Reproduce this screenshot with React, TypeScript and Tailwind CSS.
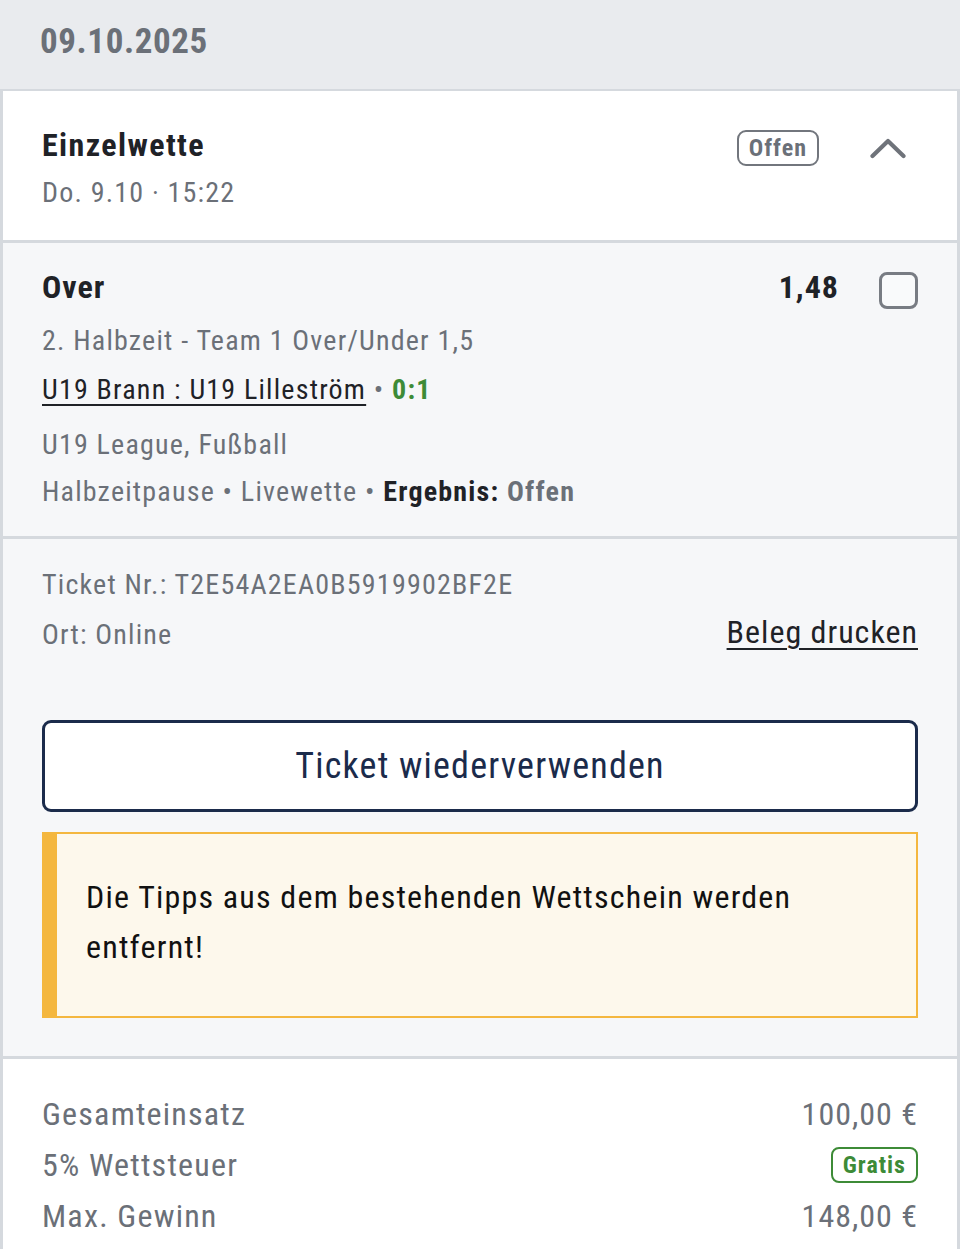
import React from 'react';

const font = { fontFamily: '"Liberation Sans Narrow", "Arial Narrow", "Roboto Condensed", Roboto, sans-serif' };

const ChevronUp = () => (
    <svg width="36" height="24" viewBox="0 0 36 24" fill="none">
        <path d="M2.5 20 L18 5 L33.5 20" stroke="#6f737a" strokeWidth="4.2" strokeLinecap="round" strokeLinejoin="round" />
    </svg>
);

const SummaryRow: React.FC<{ label: string; children: React.ReactNode }> = ({ label, children }) => (
    <div className="flex items-center justify-between h-[51px]">
        <span className="text-[32px] leading-[40px] tracking-[1.2px] text-[#6b7078]">{label}</span>
        {children}
    </div>
);

export default function App() {
    return (
        <div className="w-[960px] min-h-[1249px] bg-[#e9ebee]" style={font}>
            <div className="h-[89px] px-[40px] pb-[6px] flex items-center">
                <h2 className="text-[35px] leading-none font-bold tracking-[0.6px] text-[#6b7078]">09.10.2025</h2>
            </div>

            <div className="border-x-[3px] border-t-2 border-[#d5d9de] bg-white">
                {/* header */}
                <div className="flex items-start justify-between pl-[39px] pr-[51px] pt-[34px] h-[149px]">
                    <div className="flex flex-col gap-[10px]">
                        <span className="text-[32px] leading-[40px] font-bold tracking-[1.4px] text-[#1f2227]">Einzelwette</span>
                        <span className="text-[28px] leading-[36px] tracking-[1.2px] text-[#6b7078]">Do. 9.10 · 15:22</span>
                    </div>
                    <div className="flex items-center gap-[51px] pt-[5px]">
                        <span className="border-2 border-[#72767d] rounded-[9px] px-[10px] h-[36px] flex items-center text-[24px] font-bold tracking-[1px] text-[#6b7078]">Offen</span>
                        <ChevronUp />
                    </div>
                </div>

                {/* selection */}
                <div className="border-t-[3px] border-[#d5d9de] bg-[#f6f7f9] pl-[39px] pr-[39px] pt-[24px] h-[296px]">
                    <div className="flex items-center justify-between">
                        <span className="text-[32px] leading-[40px] font-bold tracking-[1px] text-[#1f2227]">Over</span>
                        <div className="flex items-center gap-[40px] translate-y-[3px]">
                            <span className="text-[32px] leading-[40px] font-bold tracking-[1px] text-[#1f2227] -translate-y-[3px]">1,48</span>
                            <span className="w-[39px] h-[37px] border-[3px] border-[#787c83] rounded-[8px] bg-white/40" />
                        </div>
                    </div>
                    <div className="mt-[16px] text-[28px] leading-[36px] tracking-[1.2px] text-[#6b7078]">2. Halbzeit - Team 1 Over/Under 1,5</div>
                    <div className="mt-[13px] text-[28px] leading-[36px] tracking-[1.2px]">
                        <span className="underline underline-offset-[5px] decoration-2 text-[#1f2227]">U19 Brann : U19 Lilleström</span>
                        <span className="text-[#6b7078]"> • </span>
                        <span className="font-bold text-[#3d8b37]">0:1</span>
                    </div>
                    <div className="mt-[19px] text-[28px] leading-[36px] tracking-[1.2px] text-[#6b7078]">U19 League, Fußball</div>
                    <div className="mt-[11px] text-[28px] leading-[36px] tracking-[1.2px] text-[#6b7078]">
                        Halbzeitpause • Livewette • <span className="font-bold text-[#1f2227]">Ergebnis:</span> <span className="font-bold">Offen</span>
                    </div>
                </div>

                {/* ticket */}
                <div className="border-t-[3px] border-[#d5d9de] bg-[#f6f7f9] pl-[39px] pr-[39px] pt-[28px] h-[520px]">
                    <div className="text-[28px] leading-[36px] tracking-[1.2px] text-[#6b7078]">Ticket Nr.: T2E54A2EA0B5919902BF2E</div>
                    <div className="mt-[12px] flex items-center justify-between">
                        <span className="text-[28px] leading-[36px] tracking-[1.2px] text-[#6b7078]">Ort: Online</span>
                        <span className="text-[32px] leading-[40px] tracking-[1px] text-[#1f2227] underline underline-offset-[5px] decoration-2 -translate-y-[3px]">Beleg drucken</span>
                    </div>
                    <button className="mt-[65px] w-full h-[92px] border-[3px] border-[#1b2b4b] rounded-[9px] bg-white text-[36px] tracking-[1.2px] text-[#1b2b4b]">
                        Ticket wiederverwenden
                    </button>
                    <div className="mt-[20px] h-[186px] flex border-2 border-l-[15px] border-[#f4b73f] bg-[#fdf8ec] pl-[29px] pr-[30px] items-center">
                        <p className="text-[32px] leading-[50px] tracking-[1.2px] text-[#111] pb-[6px]">
                            Die Tipps aus dem bestehenden Wettschein werden entfernt!
                        </p>
                    </div>
                </div>

                {/* summary */}
                <div className="border-t-[3px] border-[#d5d9de] bg-white pl-[39px] pr-[39px] pt-[29px] pb-[20px]">
                    <SummaryRow label="Gesamteinsatz">
                        <span className="text-[32px] leading-[40px] tracking-[1px] text-[#6b7078]">100,00 €</span>
                    </SummaryRow>
                    <SummaryRow label="5% Wettsteuer">
                        <span className="border-2 border-[#3d8b37] rounded-[8px] px-[10px] h-[36px] flex items-center text-[24px] font-bold tracking-[1px] text-[#3d8b37]">Gratis</span>
                    </SummaryRow>
                    <SummaryRow label="Max. Gewinn">
                        <span className="text-[32px] leading-[40px] tracking-[1px] text-[#6b7078]">148,00 €</span>
                    </SummaryRow>
                </div>
            </div>
        </div>
    );
}
